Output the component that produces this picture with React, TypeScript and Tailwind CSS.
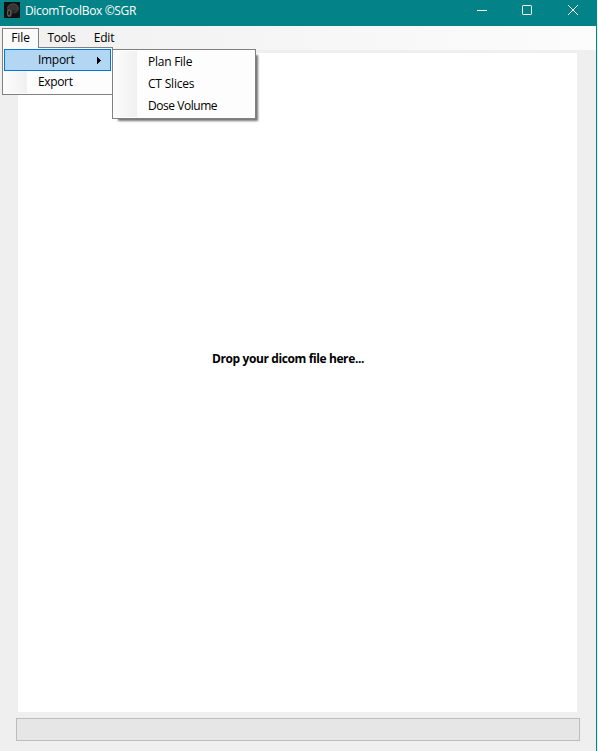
import React from "react";

type ItemProps = { label: string; className?: string; active?: boolean };

function MenuItem({ label, className = "", active = false }: ItemProps) {
  return (
    <div
      className={
        "relative flex h-[22px] items-center whitespace-nowrap pl-[34px] " +
        (active ? "bg-[#b3d7f3] outline outline-1 -outline-offset-1 outline-[#0078d7] " : "") +
        className
      }
    >
      <span>{label}</span>
      {active && (
        <svg className="absolute right-[10px] top-[8px]" width="4" height="7" viewBox="0 0 4 7" shapeRendering="crispEdges">
          <path d="M0 0H1V1H2V2H3V3H4V4H3V5H2V6H1V7H0Z" fill="#000" />
        </svg>
      )}
    </div>
  );
}

function SkullIcon() {
  return (
    <svg width="16" height="16" viewBox="0 0 16 16" className="shrink-0">
      <rect width="16" height="16" fill="#111" />
      <path d="M3 7 C3 3.5 6 1.5 9.5 1.5 C13 1.5 15 4 14.6 7.5 C14.3 10 12.5 11 11 11.5 L8.5 11 L7 15 L4 15 L3 12 Z" fill="#363636" />
      <path d="M3.5 6.5 C4 3.5 6.5 2 9.5 2 C12.5 2 14.5 4.5 14 8" fill="none" stroke="#4c4c4c" strokeWidth="0.9" />
      <ellipse cx="5.2" cy="11" rx="1.6" ry="3" fill="#191919" stroke="#626262" strokeWidth="1.1" />
      <path d="M8 9 L12 8 L9 11 Z" fill="#222" />
    </svg>
  );
}

export default function App() {
  return (
    <div className="relative flex h-[751px] w-[598px] flex-col overflow-hidden bg-[#e6f1f1] font-['Open_Sans','Noto_Sans',sans-serif] text-[12px] leading-[16px] text-black">
      <header className="flex h-[26px] w-[597px] shrink-0 items-start bg-[#038387] text-white">
        <div className="flex pl-1 pt-[2px]">
          <SkullIcon />
          <span className="ml-[5px] mt-px whitespace-nowrap tracking-[-0.35px]">DicomToolBox ©SGR</span>
        </div>
        <svg className="ml-auto mr-[18px] mt-[5px]" width="102" height="11" viewBox="0 0 102 11" fill="none" stroke="#fff">
          <path d="M0 5.5H10" />
          <rect x="45.5" y="0.5" width="9" height="9" rx="0.7" />
          <path d="M91 0L101 10M101 0L91 10" />
        </svg>
      </header>

      <div className="flex min-h-0 w-[597px] flex-1 flex-col border-r border-[#038387] bg-[#efefef]">
        <nav className="flex h-[24px] shrink-0 items-start bg-gradient-to-r from-[#f0f0f0] to-[#fcfcfc] pl-[2px] pt-[2px]">
          <div className="flex h-[20px] w-[37px] justify-center border border-b-0 border-[#808080] bg-[#fafafa] pt-px tracking-[-0.1px]">File</div>
          <div className="w-[45px] pt-[2px] text-center tracking-[-0.4px]">Tools</div>
          <div className="w-[40px] pt-[2px] text-center tracking-[-0.2px]">Edit</div>
        </nav>

        <main className="ml-[18px] mt-[3px] flex h-[659px] w-[559px] shrink-0 items-start bg-white pl-[194px] pt-[298px]">
          <span className="whitespace-nowrap font-bold tracking-[-0.39px]">Drop your dicom file here...</span>
        </main>

        <div className="ml-4 mt-[6px] h-[23px] w-[564px] shrink-0 border border-[#bcbcbc] bg-[#e6e6e6]" />
      </div>

      <div className="absolute left-[2px] top-[47px] h-[48px] w-[111px] border border-[#808080] bg-[#fdfdfd] p-px">
        <div className="absolute left-px top-px h-[44px] w-[23px] bg-gradient-to-r from-[#fcfcfc] to-[#f0f0f0]" />
        <MenuItem label="Import" active className="w-[107px] tracking-[-0.3px]" />
        <MenuItem label="Export" className="tracking-[-0.35px]" />
      </div>
      <div className="absolute left-[3px] top-[47px] h-px w-[35px] bg-[#fafafa]" />

      <div className="absolute left-[112px] top-[49px] h-[70px] w-[144px] border border-[#808080] bg-[#fdfdfd] px-px py-px shadow-[4px_4px_2px_-2px_rgba(0,0,0,0.55)]">
        <div className="absolute left-px top-px h-[66px] w-[23px] bg-gradient-to-r from-[#fcfcfc] to-[#f0f0f0]" />
        <MenuItem label="Plan File" className="tracking-[-0.25px]" />
        <MenuItem label="CT Slices" className="tracking-[-0.2px]" />
        <MenuItem label="Dose Volume" className="tracking-[-0.45px]" />
      </div>
    </div>
  );
}
